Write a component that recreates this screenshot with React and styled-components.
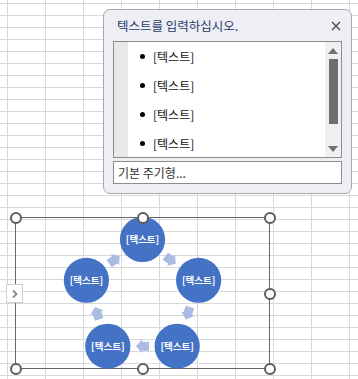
import React from "react";
import styled, { createGlobalStyle } from "styled-components";

const GlobalStyle = createGlobalStyle`
  html, body {
    margin: 0;
    padding: 0;
    background: #fff;
    font-family: "Noto Sans CJK KR", "Noto Sans", sans-serif;
  }
`;

const Sheet = styled.div`
  position: relative;
  width: 358px;
  height: 379px;
  overflow: hidden;
  background-color: #fff;
  background-image: linear-gradient(to right, #d9d9d9 1px, transparent 1px),
    linear-gradient(to bottom, #d9d9d9 1px, transparent 1px);
  background-size: 38px 12px;
  background-position: 7px 3px;
`;

/* text pane */
const Pane = styled.div`
  position: absolute;
  left: 103px;
  top: 9px;
  width: 249px;
  height: 185px;
  box-sizing: border-box;
  border: 1px solid #a6a9ae;
  border-radius: 7px;
  background: #efeef4;
  padding: 0 9px 9px 9px;
  display: flex;
  flex-direction: column;
`;

const PaneHeader = styled.div`
  height: 31px;
  display: flex;
  align-items: center;
  justify-content: space-between;
  padding-left: 4px;
  padding-right: 0;
`;

const PaneTitle = styled.span`
  font-size: 12.5px;
  line-height: 14px;
  color: #1f3a6b;
`;

const CloseButton = styled.button`
  width: 12px;
  height: 12px;
  padding: 0;
  border: none;
  background: none;
  display: flex;
  align-items: center;
  justify-content: center;
`;

const ListBox = styled.div`
  height: 117px;
  box-sizing: border-box;
  border: 1px solid #8c8c8c;
  background: #fff;
  display: flex;
  overflow: hidden;
`;

const Gutter = styled.div`
  width: 14px;
  background: #e8e8e8;
`;

const Items = styled.ul`
  flex: 1;
  margin: 0;
  padding: 0 0 0 12px;
  list-style: none;
`;

const Item = styled.li`
  height: 29px;
  display: flex;
  align-items: center;
  gap: 8px;
  font-size: 12px;
  color: #111;
`;

const Bullet = styled.span`
  width: 5px;
  height: 5px;
  border-radius: 50%;
  background: #000;
`;

const Scrollbar = styled.div`
  width: 16px;
  background: #f0f0f0;
  display: flex;
  flex-direction: column;
  align-items: center;
  padding: 6px 0 5px;
  box-sizing: border-box;
`;

const ScrollArrow = styled.div`
  width: 0;
  height: 0;
  border-left: 5px solid transparent;
  border-right: 5px solid transparent;
  ${(p) =>
    p.down
      ? "border-top: 6px solid #6f6f6f; margin-top: auto;"
      : "border-bottom: 6px solid #6f6f6f;"}
`;

const Thumb = styled.div`
  width: 9px;
  height: 65px;
  margin-top: 5px;
  background: #6e6e6e;
`;

const LayoutInput = styled.div`
  margin-top: 3px;
  height: 23px;
  box-sizing: border-box;
  border: 1px solid #8c8c8c;
  background: #fff;
  display: flex;
  align-items: center;
  padding-left: 4px;
  font-size: 12px;
  color: #333;
`;

/* smartart frame */
const Frame = styled.div`
  position: absolute;
  left: 15px;
  top: 217px;
  width: 255px;
  height: 152px;
  box-sizing: border-box;
  border: 1px solid #666;
`;

const Diagram = styled.svg`
  position: absolute;
  left: -1px;
  top: -1px;
  overflow: visible;
`;

const Handle = styled.span`
  position: absolute;
  left: ${(p) => p.x}px;
  top: ${(p) => p.y}px;
  width: 8px;
  height: 8px;
  margin: -6px 0 0 -6px;
  border: 2px solid #5c5c5c;
  border-radius: 50%;
  background: #fff;
`;

const ExpandButton = styled.button`
  position: absolute;
  left: -10px;
  top: 66px;
  width: 17px;
  height: 19px;
  padding: 0;
  box-sizing: border-box;
  border: 1px solid #cfcfcf;
  background: #fff;
  display: flex;
  align-items: center;
  justify-content: center;
`;

const CX = 127.5;
const CY = 81.5;
const R = 59;
const angles = [-90, -18, 54, 126, 198];

const nodes = angles.map((a) => ({
  x: CX + R * Math.cos((a * Math.PI) / 180),
  y: CY + R * Math.sin((a * Math.PI) / 180),
}));

const arrows = angles.map((a) => {
  const m = a + 36;
  const d = R * Math.cos(Math.PI / 5);
  return {
    x: CX + d * Math.cos((m * Math.PI) / 180),
    y: CY + d * Math.sin((m * Math.PI) / 180),
    rot: m + 90,
  };
});

const handles = [
  [0, 0], [127, 0], [254, 0], [254, 76], [254, 151], [127, 151], [0, 151],
];

const App = () => {
  return (
    <>
      <GlobalStyle />
      <Sheet>
        <Frame>
          <Diagram width="255" height="152">
            {arrows.map((ar, i) => (
              <path
                key={"a" + i}
                d="M-6.5 -4.5 L0.5 -4.5 L0.5 -7 L6.5 0 L0.5 7 L0.5 4.5 L-6.5 4.5 Z"
                fill="#abbbe2"
                transform={`translate(${ar.x} ${ar.y}) rotate(${ar.rot})`}
              />
            ))}
            {nodes.map((n, i) => (
              <g key={"n" + i}>
                <circle cx={n.x} cy={n.y} r="22.6" fill="#4472c4" />
                <text
                  x={n.x}
                  y={n.y + 3.5}
                  textAnchor="middle"
                  fontSize="9.5"
                  fontWeight="bold"
                  fill="#fff"
                  fontFamily='"Noto Sans CJK KR", sans-serif'
                >
                  [텍스트]
                </text>
              </g>
            ))}
          </Diagram>
          {handles.map(([x, y], i) => (
            <Handle key={i} x={x} y={y} />
          ))}
          <ExpandButton>
            <svg width="8" height="10" viewBox="0 0 8 10">
              <polyline points="2,1.5 5.5,5 2,8.5" fill="none" stroke="#8a8a8a" strokeWidth="1.8" />
            </svg>
          </ExpandButton>
        </Frame>

        <Pane>
          <PaneHeader>
            <PaneTitle>텍스트를 입력하십시오.</PaneTitle>
            <CloseButton>
              <svg width="10" height="10" viewBox="0 0 10 10">
                <path d="M1 1 L9 9 M9 1 L1 9" stroke="#444" strokeWidth="1.2" />
              </svg>
            </CloseButton>
          </PaneHeader>
          <ListBox>
            <Gutter />
            <Items>
              {[0, 1, 2, 3].map((i) => (
                <Item key={i}>
                  <Bullet />
                  [텍스트]
                </Item>
              ))}
            </Items>
            <Scrollbar>
              <ScrollArrow />
              <Thumb />
              <ScrollArrow down />
            </Scrollbar>
          </ListBox>
          <LayoutInput>기본 주기형...</LayoutInput>
        </Pane>
      </Sheet>
    </>
  );
};

export default App;
